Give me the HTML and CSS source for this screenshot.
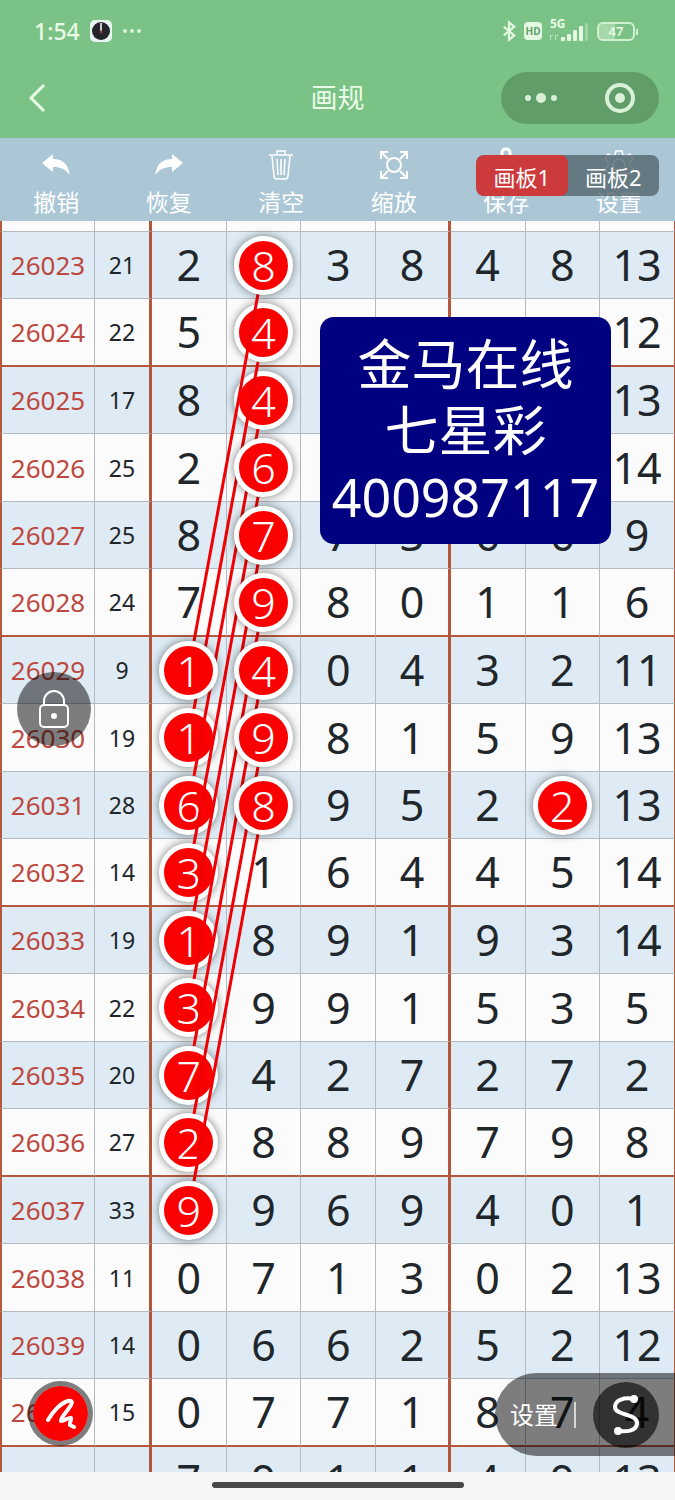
FILE: index.html
```html
<!DOCTYPE html>
<html lang="zh-CN">

<head>
    <meta charset="UTF-8">
    <meta name="viewport" content="width=device-width, initial-scale=1.0">
    <title>画规</title>
    <link rel="stylesheet" href="styles.css">
</head>

<body>

    <header class="header">
        <div class="status">
            <div class="status-side">
                <span class="time">1:54</span>
                <svg width="22" height="22" viewBox="0 0 22 22">
                    <rect width="22" height="22" rx="5" fill="#e9f5f3" />
                    <circle cx="11" cy="11" r="9" fill="#23252b" />
                    <path d="M11 3v8" stroke="#c9c9c9" stroke-width="2" />
                    <circle cx="11" cy="12" r="1.5" fill="#8a3a35" />
                </svg>
                <svg width="20" height="22" viewBox="0 0 20 22" fill="#d9f3d6">
                    <circle cx="3" cy="11" r="2" />
                    <circle cx="10" cy="11" r="2" />
                    <circle cx="17" cy="11" r="2" />
                </svg>
            </div>
            <div class="status-side right">
                <svg width="14" height="24" viewBox="0 0 16 24" fill="none" stroke="#e4f8e2" stroke-width="2.5">
                    <path d="M2 7l12 10-6 5V2l6 5L2 17" />
                </svg>
                <span class="hd">HD</span>
                <span class="signal">
                    <span class="net">5G</span>
                    <svg width="39" height="22" viewBox="0 0 39 22" fill="#e4f8e2">
                        <path d="M0 15h3v1H1v4H0zM5 15h3v1H6v4H5z" opacity=".6" />
                        <rect x="11" y="17" width="4" height="4" rx="1" />
                        <rect x="17" y="14" width="4" height="7" rx="1" />
                        <rect x="23" y="10" width="4" height="11" rx="1" />
                        <rect x="29" y="6" width="4" height="15" rx="1" />
                        <rect x="35" y="3" width="3" height="18" rx="1" opacity=".35" />
                    </svg>
                </span>
                <span class="battery">47</span>
            </div>
        </div>
        <div class="navbar">
            <button class="back" aria-label="返回">
                <svg width="18" height="30" viewBox="0 0 18 30" fill="none" stroke="#e9fbe6" stroke-width="3">
                    <path d="M16 2L3 15l13 13" />
                </svg>
            </button>
            <h1>画规</h1>
            <div class="capsule">
                <button aria-label="更多">
                    <svg width="32" height="12" viewBox="0 0 32 12" fill="#d9f0d8">
                        <circle cx="3" cy="6" r="3" />
                        <circle cx="16" cy="6" r="5" />
                        <circle cx="29" cy="6" r="3" />
                    </svg>
                </button>
                <button aria-label="关闭">
                    <svg width="30" height="30" viewBox="0 0 30 30">
                        <circle cx="15" cy="15" r="13" fill="none" stroke="#d9f0d8" stroke-width="4" />
                        <circle cx="15" cy="15" r="5" fill="#d9f0d8" />
                    </svg>
                </button>
            </div>
        </div>
    </header>

    <nav class="toolbar">
        <button class="tool">
            <svg width="30" height="30" viewBox="0 0 30 30" fill="#fff">
                <path d="M1 13L12 4v5c10 0 15 5 17 16-5-6-9-8-17-8v5z" />
            </svg>
            撤销
        </button>
        <button class="tool">
            <svg width="30" height="30" viewBox="0 0 30 30" fill="#fff">
                <path d="M29 13L18 4v5C8 9 3 14 1 25c5-6 9-8 17-8v5z" />
            </svg>
            恢复
        </button>
        <button class="tool">
            <svg width="30" height="30" viewBox="0 0 30 30" fill="none" stroke="#fff" stroke-width="1.5">
                <path d="M3 5h24M11 5V1h8v4M6 6l2 20q0 3 3 3h8q3 0 3-3l2-20M11 9l1 16M15 9v16M19 9l-1 16" />
            </svg>
            清空
        </button>
        <button class="tool">
            <svg width="30" height="30" viewBox="0 0 30 30" fill="none" stroke="#fff" stroke-width="2">
                <circle cx="15" cy="15" r="7" />
                <path d="M2 9V2h7M2 2l7 7M21 2h7v7M28 2l-7 7M2 21v7h7M2 28l7-7M28 21v7h-7M28 28l-7-7" />
            </svg>
            缩放
        </button>
        <button class="tool">
            <svg width="30" height="30" viewBox="0 0 30 30" fill="none" stroke="#fff" stroke-width="3">
                <path d="M11 8V3q0-4 4-4t4 4v5M4 10h22v18H4z" />
            </svg>
            保存
        </button>
        <button class="tool">
            <svg width="30" height="30" viewBox="0 0 30 30" fill="none" stroke="#fff" stroke-width="1.5">
                <path d="M12 1h6l1 4 3 1 4-2 3 5-3 3v4l3 3-3 5-4-1-3 2-1 4h-6l-1-4-3-2-4 1-3-5 3-3v-4L1 9l3-5 4 2 3-1z" />
                <circle cx="15" cy="15" r="6" />
            </svg>
            设置
        </button>
        <div class="boards">
            <button class="active">画板1</button>
            <button>画板2</button>
        </div>
    </nav>

    <main class="chart">
        <table>
            <colgroup>
                <col class="col-issue">
                <col class="col-sum">
                <col span="7">
            </colgroup>
            <tbody>
                <tr class="cut"><td></td><td></td><td></td><td></td><td></td><td></td><td></td><td></td><td></td></tr>
                <tr><td>26023</td><td>21</td><td>2</td><td><span class="ball top">8</span></td><td>3</td><td>8</td><td>4</td><td>8</td><td>13</td></tr>
                <tr class="line"><td>26024</td><td>22</td><td>5</td><td><span class="ball">4</span></td><td>1</td><td>8</td><td>2</td><td>2</td><td>12</td></tr>
                <tr><td>26025</td><td>17</td><td>8</td><td><span class="ball">4</span></td><td>0</td><td>1</td><td>2</td><td>2</td><td>13</td></tr>
                <tr><td>26026</td><td>25</td><td>2</td><td><span class="ball top">6</span></td><td>8</td><td>9</td><td>1</td><td>4</td><td>14</td></tr>
                <tr><td>26027</td><td>25</td><td>8</td><td><span class="ball top">7</span></td><td>7</td><td>3</td><td>6</td><td>6</td><td>9</td></tr>
                <tr class="line"><td>26028</td><td>24</td><td>7</td><td><span class="ball top">9</span></td><td>8</td><td>0</td><td>1</td><td>1</td><td>6</td></tr>
                <tr><td>26029</td><td>9</td><td><span class="ball top">1</span></td><td><span class="ball top">4</span></td><td>0</td><td>4</td><td>3</td><td>2</td><td>11</td></tr>
                <tr><td>26030</td><td>19</td><td><span class="ball">1</span></td><td><span class="ball top">9</span></td><td>8</td><td>1</td><td>5</td><td>9</td><td>13</td></tr>
                <tr><td>26031</td><td>28</td><td><span class="ball">6</span></td><td><span class="ball top">8</span></td><td>9</td><td>5</td><td>2</td><td><span class="ball">2</span></td><td>13</td></tr>
                <tr class="line"><td>26032</td><td>14</td><td><span class="ball">3</span></td><td>1</td><td>6</td><td>4</td><td>4</td><td>5</td><td>14</td></tr>
                <tr><td>26033</td><td>19</td><td><span class="ball">1</span></td><td>8</td><td>9</td><td>1</td><td>9</td><td>3</td><td>14</td></tr>
                <tr><td>26034</td><td>22</td><td><span class="ball">3</span></td><td>9</td><td>9</td><td>1</td><td>5</td><td>3</td><td>5</td></tr>
                <tr><td>26035</td><td>20</td><td><span class="ball">7</span></td><td>4</td><td>2</td><td>7</td><td>2</td><td>7</td><td>2</td></tr>
                <tr class="line"><td>26036</td><td>27</td><td><span class="ball">2</span></td><td>8</td><td>8</td><td>9</td><td>7</td><td>9</td><td>8</td></tr>
                <tr><td>26037</td><td>33</td><td><span class="ball top">9</span></td><td>9</td><td>6</td><td>9</td><td>4</td><td>0</td><td>1</td></tr>
                <tr><td>26038</td><td>11</td><td>0</td><td>7</td><td>1</td><td>3</td><td>0</td><td>2</td><td>13</td></tr>
                <tr><td>26039</td><td>14</td><td>0</td><td>6</td><td>6</td><td>2</td><td>5</td><td>2</td><td>12</td></tr>
                <tr class="line"><td>26040</td><td>15</td><td>0</td><td>7</td><td>7</td><td>1</td><td>8</td><td>7</td><td>4</td></tr>
                <tr><td>26041</td><td></td><td>7</td><td>9</td><td>1</td><td>1</td><td>4</td><td>9</td><td>13</td></tr>
            </tbody>
        </table>

        <!-- 连线 -->
        <svg class="links" viewBox="0 0 675 1251" preserveAspectRatio="none" stroke="#f00004" stroke-width="3">
            <line x1="258" y1="73" x2="194" y2="420" />
            <line x1="258" y1="141" x2="194" y2="488" />
            <line x1="258" y1="208" x2="194" y2="555" />
            <line x1="258" y1="276" x2="194" y2="623" />
            <line x1="258" y1="343" x2="194" y2="690" />
            <line x1="258" y1="411" x2="194" y2="758" />
            <line x1="258" y1="478" x2="194" y2="825" />
            <line x1="258" y1="546" x2="194" y2="893" />
            <line x1="258" y1="613" x2="194" y2="960" />
        </svg>

        <div class="notice">金马在线<br>七星彩<br><span class="number">400987117</span></div>

        <button class="lock" aria-label="锁定">
            <svg width="30" height="40" viewBox="0 0 30 40" fill="none" stroke="#fff" stroke-width="2">
                <rect x="1" y="16" width="28" height="22" rx="4" />
                <path d="M5 16v-4a10 10 0 0 1 20 0v4" />
                <circle cx="15" cy="27" r="3" fill="#fff" stroke="none" />
            </svg>
        </button>

        <button class="pen" aria-label="画笔">
            <svg width="32" height="32" viewBox="0 0 32 32" fill="none" stroke="#fff" stroke-width="4" stroke-linecap="round" stroke-linejoin="round">
                <path d="M3 22C7 15 15 5 23 3c6-1 4 3 1 7-3 5-8 9-8 13 4 0 7-4 10-3 1 2-2 4-1 7l4 2" />
            </svg>
        </button>

        <div class="setting">
            <button class="setting-text">设置</button>
            <button class="curve" aria-label="曲线">
                <svg width="30" height="42" viewBox="0 0 30 42" fill="none" stroke="#fff" stroke-width="4">
                    <path d="M23 5C13 3 4 6 4 13c0 9 22 6 22 16 0 8-10 9-19 8" />
                    <circle cx="23" cy="5" r="4" fill="#fff" stroke="none" />
                    <circle cx="7" cy="37" r="4" fill="#fff" stroke="none" />
                </svg>
            </button>
        </div>
    </main>

    <footer class="home"><span></span></footer>

</body>

</html>
```
FILE: styles.css
```css
* {
    box-sizing: border-box;
}

body {
    margin: 0;
    height: 100vh;
    display: flex;
    flex-direction: column;
    overflow: hidden;
    background-color: #f6f6f6;
    font-family: "Noto Sans", "Noto Sans CJK SC", sans-serif;
}

button {
    padding: 0;
    border: none;
    background: none;
    color: #fff;
    font-family: inherit;
    cursor: pointer;
}

svg {
    display: block;
    overflow: visible;
}

/* 顶部 */
.header {
    height: 138px;
    background-color: #7ac285;
    color: #e9fbe6;
}

.status {
    display: flex;
    justify-content: space-between;
    height: 58px;
    padding: 4px 40px 0 34px;
}

.status-side {
    display: flex;
    align-items: center;
    gap: 10px;
}

.status-side.right {
    gap: 8px;
}

.time {
    font-size: 23px;
    font-weight: 500;
}

.hd {
    width: 18px;
    border-radius: 4px;
    background-color: #e4f8e2;
    color: #5f9f68;
    font-size: 10px;
    font-weight: 700;
    line-height: 18px;
    text-align: center;
}

.signal {
    position: relative;
}

.net {
    position: absolute;
    top: -3px;
    left: 0;
    font-size: 12px;
    font-weight: 700;
    line-height: 14px;
}

.battery {
    position: relative;
    width: 38px;
    border: 2px solid #d3efd1;
    border-radius: 6px;
    background: linear-gradient(90deg, #a5d8a8 47%, transparent 47%);
    font-size: 13px;
    font-weight: 600;
    line-height: 15px;
    text-align: center;
}

.battery::after {
    content: "";
    position: absolute;
    top: 5px;
    right: -5px;
    width: 2px;
    height: 6px;
    background-color: #d3efd1;
}

.navbar {
    display: grid;
    grid-template-columns: 1fr auto 1fr;
    align-items: center;
    height: 80px;
    padding: 0 16px;
}

.back {
    justify-self: start;
    margin-left: 12px;
}

.navbar h1 {
    margin: 0;
    font-size: 27px;
    font-weight: 400;
    line-height: 36px;
}

.capsule {
    justify-self: end;
    display: flex;
    width: 158px;
    height: 52px;
    border-radius: 26px;
    background-color: #619d69;
}

.capsule button {
    flex: 1;
    display: flex;
    align-items: center;
    justify-content: center;
}

/* 工具栏 */
.toolbar {
    position: relative;
    display: flex;
    height: 83px;
    background-color: #abc7d5;
}

.tool {
    flex: 1;
    display: flex;
    flex-direction: column;
    align-items: center;
    gap: 6px;
    padding-top: 12px;
    font-size: 23px;
    line-height: 32px;
}

.boards {
    position: absolute;
    top: 17px;
    right: 16px;
    display: flex;
    width: 183px;
    height: 41px;
    border-radius: 8px;
    overflow: hidden;
    background-color: rgba(84, 101, 109, 0.8);
}

.boards button {
    flex: 1;
    padding-top: 4px;
    font-size: 22px;
    line-height: 37px;
}

.boards .active {
    border-radius: 8px;
    background-color: #cc3a3c;
}

/* 走势图 */
.chart {
    position: relative;
    flex: 1;
    min-height: 0;
    overflow: hidden;
}

table {
    width: 100%;
    table-layout: fixed;
    border-collapse: separate;
    border-spacing: 0;
}

.col-issue {
    width: 95px;
}

.col-sum {
    width: 57px;
}

tr {
    height: 68px;
    background-color: #fbfbfb;
}

tr:nth-child(even) {
    height: 67px;
    background-color: #deebf4;
}

tr.cut {
    height: 11px;
}

td {
    padding: 0;
    border-right: 1px solid #b3bac0;
    border-bottom: 1px solid #b3bac0;
    color: #20262a;
    font-size: 43px;
    line-height: 58px;
    text-align: center;
}

td:nth-child(1) {
    border-left: 2px solid #b5583c;
    color: #bd4840;
    font-size: 26px;
}

td:nth-child(2) {
    font-size: 23px;
}

td:nth-child(2),
td:nth-child(6) {
    border-right: 3px solid #b0573c;
}

td:last-child {
    border-right: 1px solid #b5583c;
}

.line td {
    border-bottom: 2px solid #b5583c;
}

.ball {
    position: relative;
    display: block;
    width: 59px;
    height: 59px;
    margin: 0 auto;
    border: 5px solid #fff;
    border-radius: 50%;
    background-color: #fb0000;
    box-shadow: 0 0 9px rgba(0, 0, 0, 0.5);
    color: #fff;
    font-weight: 300;
    line-height: 49px;
}

.ball.top {
    z-index: 2;
}

.links {
    position: absolute;
    top: 0;
    left: 0;
    z-index: 1;
    width: 100%;
    height: 1251px;
}

.notice {
    position: absolute;
    top: 96px;
    left: 320px;
    z-index: 3;
    width: 291px;
    padding: 14px 0;
    border-radius: 14px;
    background-color: #000080;
    color: #fff;
    font-size: 54px;
    line-height: 66px;
    text-align: center;
}

.number {
    font-size: 52px;
}

.lock {
    position: absolute;
    top: 451px;
    left: 17px;
    z-index: 3;
    display: flex;
    align-items: center;
    justify-content: center;
    width: 74px;
    height: 74px;
    border-radius: 50%;
    background-color: rgba(0, 0, 0, 0.5);
}

.pen {
    position: absolute;
    bottom: 26px;
    left: 28px;
    z-index: 3;
    display: flex;
    align-items: center;
    justify-content: center;
    width: 65px;
    height: 65px;
    border: 5px solid rgba(0, 0, 0, 0.5);
    border-radius: 50%;
    background-color: #fb0000;
    background-clip: padding-box;
}

.setting {
    position: absolute;
    right: 0;
    bottom: 16px;
    z-index: 3;
    display: flex;
    align-items: center;
    justify-content: space-between;
    width: 180px;
    height: 83px;
    padding: 0 16px 0 15px;
    border-radius: 42px 0 0 42px;
    background-color: rgba(0, 0, 0, 0.5);
}

.setting-text {
    padding-right: 16px;
    border-right: 2px solid #d8d8d8;
    font-size: 24px;
    line-height: 26px;
}

.curve {
    display: flex;
    align-items: center;
    justify-content: center;
    width: 66px;
    height: 66px;
    border-radius: 50%;
    background-color: rgba(0, 0, 0, 0.6);
}

.home {
    display: flex;
    justify-content: center;
    height: 28px;
    padding-top: 10px;
}

.home span {
    width: 252px;
    height: 6px;
    border-radius: 3px;
    background-color: #484848;
}
```
